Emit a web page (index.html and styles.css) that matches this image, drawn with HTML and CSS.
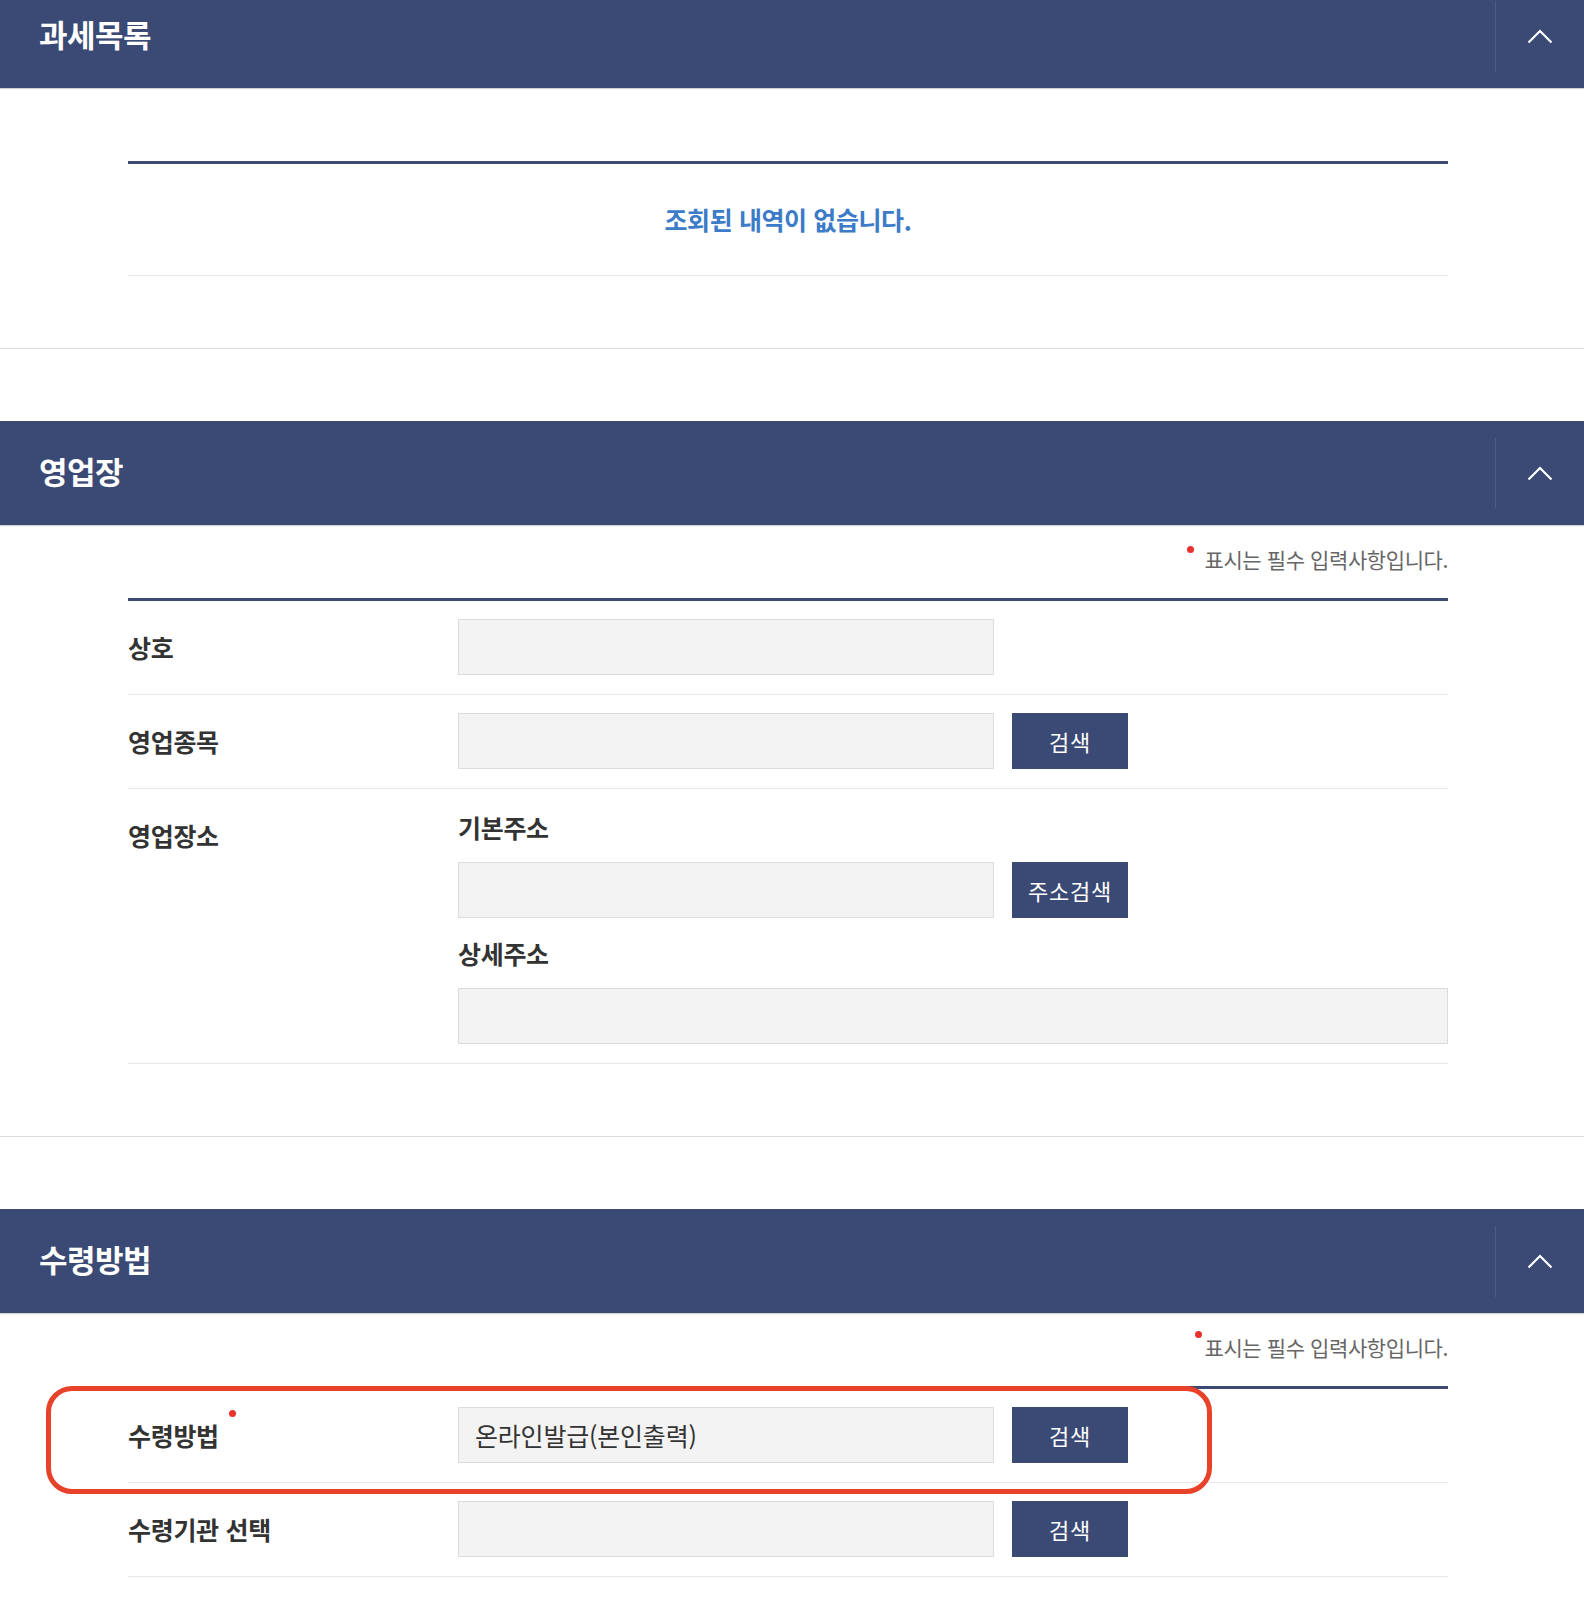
FILE: index.html
```html
<!DOCTYPE html>
<html lang="ko">
<head>
<meta charset="utf-8">
<title>신청서</title>
<link rel="stylesheet" href="styles.css">
</head>
<body>
<div class="page">

  <section class="panel panel-first">
    <div class="panel-head">
      <h2 class="panel-title">과세목록</h2>
      <button class="toggle" type="button" aria-label="접기">
        <svg width="26" height="15" viewBox="0 0 26 15"><polyline points="1.5,13.5 13,2 24.5,13.5" fill="none" stroke="#fff" stroke-width="2.2"/></svg>
      </button>
    </div>
    <div class="panel-body">
      <div class="note"></div>
      <div class="form-table">
        <div class="empty-row"><p class="empty">조회된 내역이 없습니다.</p></div>
      </div>
    </div>
  </section>

  <section class="panel">
    <div class="panel-head">
      <h2 class="panel-title">영업장</h2>
      <button class="toggle" type="button" aria-label="접기">
        <svg width="26" height="15" viewBox="0 0 26 15"><polyline points="1.5,13.5 13,2 24.5,13.5" fill="none" stroke="#fff" stroke-width="2.2"/></svg>
      </button>
    </div>
    <div class="panel-body">
      <div class="note"><span class="dot dot-spaced"></span><span class="note-text">표시는 필수 입력사항입니다.</span></div>
      <div class="form-table">
        <div class="row">
          <div class="label">상호</div>
          <div class="field"><div class="line"><div class="input"></div></div></div>
        </div>
        <div class="row">
          <div class="label">영업종목</div>
          <div class="field"><div class="line"><div class="input"></div><button class="btn" type="button">검색</button></div></div>
        </div>
        <div class="row">
          <div class="label">영업장소</div>
          <div class="field">
            <div class="sub-label">기본주소</div>
            <div class="line"><div class="input"></div><button class="btn" type="button">주소검색</button></div>
            <div class="sub-label sub-label-2">상세주소</div>
            <div class="line"><div class="input input-full"></div></div>
          </div>
        </div>
      </div>
    </div>
  </section>

  <section class="panel">
    <div class="panel-head">
      <h2 class="panel-title">수령방법</h2>
      <button class="toggle" type="button" aria-label="접기">
        <svg width="26" height="15" viewBox="0 0 26 15"><polyline points="1.5,13.5 13,2 24.5,13.5" fill="none" stroke="#fff" stroke-width="2.2"/></svg>
      </button>
    </div>
    <div class="panel-body">
      <div class="note"><span class="dot dot-tight"></span><span class="note-text">표시는 필수 입력사항입니다.</span></div>
      <div class="form-table">
        <div class="row">
          <div class="label">수령방법<span class="label-dot"></span></div>
          <div class="field"><div class="line"><div class="input">온라인발급(본인출력)</div><button class="btn" type="button">검색</button></div></div>
        </div>
        <div class="row">
          <div class="label">수령기관 선택</div>
          <div class="field"><div class="line"><div class="input"></div><button class="btn" type="button">검색</button></div></div>
        </div>
      </div>
    </div>
    <div class="highlight"></div>
  </section>

</div>
</body>
</html>
```

FILE: styles.css
```css
* { box-sizing: border-box; }

html, body {
  margin: 0;
  padding: 0;
  background: #fff;
}

body {
  font-family: "Noto Sans CJK KR", "Noto Sans", sans-serif;
  color: #333;
  width: 1584px;
  overflow: hidden;
}

.page {
  width: 1584px;
}

.panel {
  position: relative;
  margin-bottom: 72px;
}

.panel-first {
  margin-top: -16px;
}

.panel-head {
  height: 104px;
  background: #3a4a75;
  display: flex;
  align-items: center;
  justify-content: space-between;
  padding-left: 39px;
  box-shadow: 0 1px 1px rgba(0, 0, 0, 0.18);
}

.panel-title {
  margin: 0 0 4px;
  font-size: 31px;
  font-weight: 700;
  color: #fff;
  letter-spacing: -0.5px;
  line-height: 40px;
}

.toggle {
  width: 89px;
  height: 71px;
  border: 0;
  border-left: 1px solid #4d5c84;
  background: transparent;
  padding: 0;
  display: flex;
  align-items: center;
  justify-content: center;
  cursor: pointer;
}

.toggle svg { display: block; }

.panel-body {
  padding: 0 136px 72px 128px;
  border-bottom: 1px solid #dcdcdc;
}

.note {
  height: 73px;
  padding-top: 20px;
  display: flex;
  justify-content: flex-end;
  align-items: flex-start;
}

.note-text {
  font-size: 21px;
  line-height: 28px;
  color: #666;
  letter-spacing: -0.4px;
}

.dot {
  width: 7px;
  height: 7px;
  border-radius: 50%;
  background: #e8322b;
  margin-top: 1px;
}

.dot-spaced { margin-right: 11px; }
.dot-tight { margin-right: 3px; margin-top: -2px; }

.form-table {
  width: 1320px;
  border-top: 3px solid #3a4a75;
}

.empty-row {
  height: 112px;
  border-bottom: 1px solid #e6e6e6;
  display: flex;
  align-items: center;
  justify-content: center;
}

.empty {
  margin: 0 0 2px;
  font-size: 25px;
  font-weight: 700;
  color: #3b7bc8;
  letter-spacing: -0.4px;
}

.row {
  display: flex;
  padding: 18px 0 19px;
  border-bottom: 1px solid #e8e8e8;
}

.label {
  width: 330px;
  flex: none;
  font-size: 25px;
  font-weight: 700;
  line-height: 56px;
  color: #333;
  letter-spacing: -0.3px;
}

.label-dot {
  display: inline-block;
  width: 7px;
  height: 7px;
  border-radius: 50%;
  background: #e8322b;
  vertical-align: top;
  margin-top: 3px;
  margin-left: 10px;
}

.field {
  flex: 1;
  display: flex;
  flex-direction: column;
}

.sub-label {
  font-size: 25px;
  font-weight: 700;
  line-height: 40px;
  color: #333;
  letter-spacing: -0.3px;
  margin-bottom: 15px;
}

.sub-label-2 { margin-top: 15px; }

.line {
  display: flex;
  gap: 18px;
}

.input {
  width: 536px;
  height: 56px;
  background: #f3f3f3;
  border: 1px solid #dcdcdc;
  padding: 0 16px;
  font-size: 25px;
  line-height: 54px;
  color: #333;
  letter-spacing: -0.2px;
}

.input-full { width: 100%; }

.btn {
  width: 116px;
  height: 56px;
  border: 0;
  background: #3a4a75;
  color: #fff;
  font-family: inherit;
  font-size: 22px;
  letter-spacing: 0.8px;
  padding: 0;
  cursor: pointer;
}

.highlight {
  position: absolute;
  left: 46px;
  top: 177px;
  width: 1166px;
  height: 108px;
  border: 5px solid #e8422a;
  border-radius: 26px;
  pointer-events: none;
}
```
